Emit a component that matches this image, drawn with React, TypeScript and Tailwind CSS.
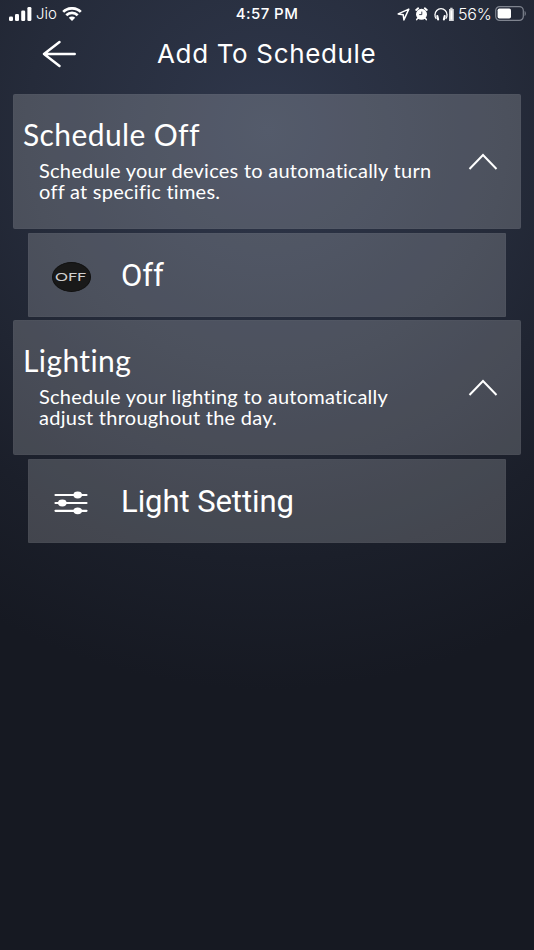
import type { ReactNode } from 'react'

function SignalIcon() {
  return (
    <svg width="23" height="15" viewBox="0 0 23 15" fill="#fff">
      <rect x="0" y="9.5" width="4" height="4.5" rx="1.3" />
      <rect x="6" y="7" width="4" height="7" rx="1.3" />
      <rect x="12.2" y="3.5" width="4" height="10.5" rx="1.3" />
      <rect x="18.4" y="0" width="4" height="14" rx="1.3" />
    </svg>
  )
}

function WifiIcon() {
  return (
    <svg width="20" height="15" viewBox="0 0 20 15" fill="none" stroke="#fff" strokeWidth="2.7">
      <path d="M1.2 4.9a12.6 12.6 0 0 1 17.6 0" />
      <path d="M4.3 8.2a8.2 8.2 0 0 1 11.4 0" />
      <path d="M10 14.1 6.8 10.8a4.6 4.6 0 0 1 6.4 0Z" fill="#fff" stroke="none" />
    </svg>
  )
}

function LocationIcon() {
  return (
    <svg width="13" height="13" viewBox="0 0 13 13" fill="none" stroke="#fff" strokeWidth="1.5" strokeLinejoin="round">
      <path d="M11.8 1.1 1.2 5.9l5 .8.7 5.2Z" />
    </svg>
  )
}

function AlarmIcon() {
  return (
    <svg width="13" height="14" viewBox="0 0 13 14">
      <g stroke="#fff" strokeLinecap="round">
        <path d="M1.2 3 3.2 1.3M11.8 3 9.8 1.3" strokeWidth="1.9" />
        <path d="m2.7 11.2-1 1.5M10.3 11.2l1 1.5" strokeWidth="1.5" />
      </g>
      <circle cx="6.5" cy="7.3" r="5.5" fill="#fff" />
      <path d="M6.8 4.6v3H4.2" fill="none" stroke="#272e3d" strokeWidth="0.9" />
    </svg>
  )
}

function HeadphonesIcon() {
  return (
    <svg width="20" height="15" viewBox="0 0 20 15" fill="none">
      <path d="M2.3 11.9A5.4 5.4 0 0 1 1 7.7a6 6 0 0 1 12 0 5.4 5.4 0 0 1-1.3 4.2" stroke="#fff" strokeWidth="1.3" />
      <path d="m3.3 9 .8 3.4M10.7 9l-.8 3.4" stroke="#fff" strokeWidth="2.1" strokeLinecap="round" />
      <path d="M15 2h1.200V.7h2.400V2h1.200v12H15Z" fill="#d5d7da" />
      <path d="M17.4 3.5v9" stroke="#fff" strokeWidth="1.6" />
    </svg>
  )
}

function BatteryIcon() {
  return (
    <svg width="32" height="16" viewBox="0 0 32 16">
      <rect x=".7" y=".6" width="27.6" height="13.8" rx="4" fill="none" stroke="#7f848f" strokeWidth="1.2" />
      <rect x="2.6" y="2.5" width="13.4" height="10" rx="1.8" fill="#fff" />
      <path d="M29.6 5c1.6.5 1.6 4.5 0 5Z" fill="#7f848f" />
    </svg>
  )
}

function StatusBar() {
  return (
    <div className="grid h-7 grid-cols-3 items-center pl-[9px] pr-[7px] font-['Inter',sans-serif] text-white">
      <div className="flex items-center">
        <SignalIcon />
        <span className="ml-[4px] w-[22px] whitespace-nowrap text-[15px] font-light">Jio</span>
        <span className="ml-[4px]">
          <WifiIcon />
        </span>
      </div>
      <div className="-ml-[2px] whitespace-nowrap text-center text-[15px] font-medium tracking-[0.45px]">4:57 PM</div>
      <div className="flex items-center justify-end">
        <LocationIcon />
        <span className="ml-[5px]">
          <AlarmIcon />
        </span>
        <span className="ml-[6px]">
          <HeadphonesIcon />
        </span>
        <span className="ml-[4px] w-[34px] whitespace-nowrap text-[16px] font-light tracking-[-0.2px]">56%</span>
        <span className="ml-[3px]">
          <BatteryIcon />
        </span>
      </div>
    </div>
  )
}

function Section({ title, lines }: { title: string; lines: string[] }) {
  return (
    <section className="flex h-[135px] items-start justify-between rounded-[2px] border border-white/2 bg-white/18 pl-[9px] pr-[22px]">
      <div className="pt-[21px]">
        <h2 className="text-[30px] leading-9 tracking-[0.4px]">{title}</h2>
        <p className="mt-[8px] whitespace-nowrap pl-[16px] text-[20px] leading-[20.5px] tracking-[0.26px]">
          {lines[0]}
          <br />
          {lines[1]}
        </p>
      </div>
      <svg className="mt-[57px]" width="30" height="18" viewBox="0 0 30 18" fill="none" stroke="#fff" strokeWidth="2">
        <path d="M1.5 17 15 3l13.5 14" />
      </svg>
    </section>
  )
}

function Row({ icon, label }: { icon: ReactNode; label: string }) {
  return (
    <div className="mx-[15px] flex h-[84px] items-center rounded-[1px] border border-white/2 bg-white/18 pl-[22px] font-['Roboto',sans-serif]">
      <div className="mt-[4px] flex w-10 justify-center">{icon}</div>
      <span className="ml-[30px] mt-[2px] whitespace-nowrap text-[31px] tracking-[-0.07px]">{label}</span>
    </div>
  )
}

function OffBadge() {
  return (
    <div className="flex h-[30px] w-[39px] items-center justify-center rounded-[50%] border border-[#101010] bg-[#191919]">
      <span className="scale-x-135 font-['Lato',sans-serif] text-[12px] leading-none text-[#d0d0d0]">OFF</span>
    </div>
  )
}

function SlidersIcon() {
  return (
    <svg width="34" height="24" viewBox="0 0 34 24" fill="#fff" stroke="#fff" strokeWidth="2.2" strokeLinecap="round">
      <path d="M1.5 4h31M1.5 12h31M1.5 19.8h31" />
      <g stroke="none">
        <ellipse cx="23.7" cy="4" rx="4.3" ry="3.4" />
        <ellipse cx="8.3" cy="12" rx="4.3" ry="3.4" />
        <ellipse cx="23.7" cy="19.8" rx="4.3" ry="3.4" />
      </g>
    </svg>
  )
}

export default function App() {
  return (
    <div className="h-[950px] w-[534px] overflow-hidden bg-[radial-gradient(circle_at_50%_130px,#2f374b_0px,#252b3a_240px,#1b1f2a_430px,#161922_560px)] font-['Lato',sans-serif] text-white">
      <StatusBar />
      <header className="flex h-[66px] items-start pl-[42px]">
        <svg className="mt-[12px]" width="35" height="28" viewBox="0 0 35 28" fill="none" stroke="#fff" strokeWidth="2.5" strokeLinecap="round" strokeLinejoin="round">
          <path d="M32.7 14H2M17.5 2 2 14l15.500 12" />
        </svg>
        <h1 className="ml-[80px] mt-[10px] whitespace-nowrap font-['Inter',sans-serif] text-[26px] leading-8 tracking-[0.65px]">
          Add To Schedule
        </h1>
      </header>
      <main className="flex flex-col gap-[3px] px-[13px]">
        <div className="flex flex-col gap-1">
          <Section title="Schedule Off" lines={['Schedule your devices to automatically turn', 'off at specific times.']} />
          <Row icon={<OffBadge />} label="Off" />
        </div>
        <div className="flex flex-col gap-1">
          <Section title="Lighting" lines={['Schedule your lighting to automatically', 'adjust throughout the day.']} />
          <Row icon={<SlidersIcon />} label="Light Setting" />
        </div>
      </main>
    </div>
  )
}
